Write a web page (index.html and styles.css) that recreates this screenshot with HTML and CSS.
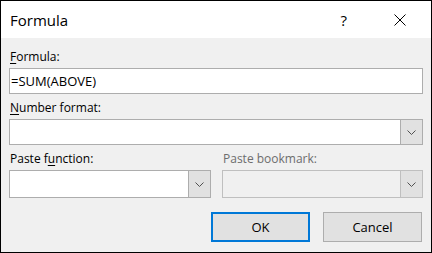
FILE: index.html
```html
<!DOCTYPE html>
<html>
<head>
<meta charset="utf-8">
<link rel="stylesheet" href="styles.css">
</head>
<body>
<div class="dialog">
  <div class="titlebar">
    <span class="title">Formula</span>
    <span class="help">?</span>
    <svg class="close" width="12" height="12" viewBox="0 0 12 12"><path d="M0.5 0.5 L11.5 11.5 M11.5 0.5 L0.5 11.5" stroke="#000" stroke-width="1" fill="none"/></svg>
  </div>
  <div class="content">
    <div class="label"><u>F</u>ormula:</div>
    <div class="edit">=SUM(ABOVE)</div>
    <div class="label"><u>N</u>umber format:</div>
    <div class="combo short">
      <div class="field"></div>
      <div class="arrow"><svg width="9" height="5" viewBox="0 0 9 5"><path d="M0.5 0.5 L4.5 4.5 L8.5 0.5" stroke="#505050" fill="none"/></svg></div>
    </div>
    <div class="pair">
      <div class="col">
        <div class="label">Paste f<u>u</u>nction:</div>
        <div class="combo">
          <div class="field"></div>
          <div class="arrow"><svg width="9" height="5" viewBox="0 0 9 5"><path d="M0.5 0.5 L4.5 4.5 L8.5 0.5" stroke="#505050" fill="none"/></svg></div>
        </div>
      </div>
      <div class="col">
        <div class="label disabled">Paste bookmark:</div>
        <div class="combo off">
          <div class="field"></div>
          <div class="arrow"><svg width="9" height="5" viewBox="0 0 9 5"><path d="M0.5 0.5 L4.5 4.5 L8.5 0.5" stroke="#505050" fill="none"/></svg></div>
        </div>
      </div>
    </div>
    <div class="buttons">
      <div class="btn default">OK</div>
      <div class="btn">Cancel</div>
    </div>
  </div>
</div>
</body>
</html>
```
FILE: styles.css
```css
html, body {
  margin: 0;
  padding: 0;
}
body {
  font-family: "Open Sans", "Noto Sans", sans-serif;
  color: #000;
}
.dialog {
  width: 432px;
  height: 253px;
  box-sizing: border-box;
  border: 1px solid #000;
  background: #f0f0f0;
  display: flex;
  flex-direction: column;
}
.titlebar {
  height: 37px;
  flex: none;
  background: #fff;
  display: flex;
  align-items: center;
}
.title {
  margin-left: 9px;
  font-size: 15px;
  flex: 1;
}
.help {
  font-size: 15px;
  margin-right: 47px;
}
.close {
  margin-right: 25px;
  display: block;
}
.content {
  padding: 11px 8px 0 8px;
  display: flex;
  flex-direction: column;
}
.label {
  font-size: 12px;
  line-height: 16px;
  height: 16px;
  margin-bottom: 3px;
  padding-left: 1px;
}
.label u {
  text-decoration-thickness: 1px;
  text-underline-offset: 2px;
}
.label.disabled {
  color: #6d6d6d;
}
.edit {
  height: 26px;
  box-sizing: border-box;
  border: 1px solid #adadad;
  background: #fff;
  font-size: 13px;
  line-height: 24px;
  padding-left: 1px;
  margin-bottom: 6px;
}
.combo {
  height: 28px;
  box-sizing: border-box;
  border: 1px solid #adadad;
  background: #fff;
  display: flex;
}
.combo.short {
  height: 26px;
  margin-bottom: 6px;
}
.combo .field {
  flex: 1;
}
.combo .arrow {
  width: 21px;
  border-left: 1px solid #adadad;
  background: #e1e1e1;
  display: flex;
  align-items: center;
  justify-content: center;
}
.combo.off {
  border-color: #bfbfbf;
  background: #f0f0f0;
}
.combo.off .arrow {
  border-left-color: #bfbfbf;
}
.pair {
  display: grid;
  grid-template-columns: 202px 201px;
  column-gap: 11px;
}
.buttons {
  margin-top: 14px;
  display: flex;
  justify-content: flex-end;
  gap: 13px;
  padding-right: 1px;
}
.btn {
  width: 99px;
  height: 30px;
  box-sizing: border-box;
  border: 1px solid #adadad;
  background: #e1e1e1;
  font-size: 13px;
  display: flex;
  align-items: center;
  justify-content: center;
}
.btn.default {
  border: 2px solid #0078d7;
}
```
